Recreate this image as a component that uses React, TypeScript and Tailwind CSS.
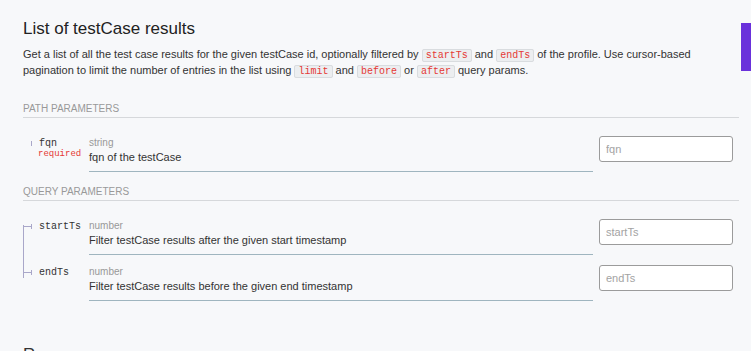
import React from "react";

type Param = {
  name: string;
  type: string;
  desc: string;
  required?: boolean;
};

const pathParams: Param[] = [
  { name: "fqn", type: "string", desc: "fqn of the testCase", required: true },
];

const queryParams: Param[] = [
  {
    name: "startTs",
    type: "number",
    desc: "Filter testCase results after the given start timestamp",
  },
  {
    name: "endTs",
    type: "number",
    desc: "Filter testCase results before the given end timestamp",
  },
];

const Code = ({ children }: { children: React.ReactNode }) => (
  <code className="font-[family-name:'Liberation_Mono',monospace] text-[10px] leading-[10px] text-[#e53935] bg-[#eceef0] border border-[#d9dcdf] px-[3px] rounded-[2px]">
    {children}
  </code>
);

const SectionHeader = ({ title, className }: { title: string; className: string }) => (
  <h5
    className={`${className} text-[10px] leading-[12px] uppercase text-[#999] pb-[2px] border-b border-[#d6d8db]`}
  >
    {title}
  </h5>
);

// tree line on the left of the name cell, like redoc's td background
const lineFor = (single: boolean, first: boolean, last: boolean) => {
  if (single) return "";
  if (first)
    return "bg-[linear-gradient(transparent_0,transparent_16px,#a9a7c9_16px,#a9a7c9_100%)] bg-[length:1px_100%] bg-no-repeat";
  if (last)
    return "bg-[linear-gradient(#a9a7c9_0,#a9a7c9_23px,transparent_23px,transparent_100%)] bg-[length:1px_100%] bg-no-repeat";
  return "bg-[linear-gradient(#a9a7c9,#a9a7c9)] bg-[length:1px_100%] bg-no-repeat";
};

const ParamRow = ({
  p,
  single,
  first,
  last,
}: {
  p: Param;
  single: boolean;
  first: boolean;
  last: boolean;
}) => (
  <div className="flex">
    <div className={`w-[66px] shrink-0 pt-[10px] ${lineFor(single, first, last)}`}>
      <div className="flex items-center h-[14px]">
        <span className={`w-[8px] h-px ${single ? "bg-transparent" : "bg-[#a9a7c9]"}`} />
        <span className="w-px h-[5px] bg-[#a9a7c9]" />
        <span className="ml-[7px] font-[family-name:'Liberation_Mono',monospace] text-[10px] text-[#333]">
          {p.name}
        </span>
      </div>
      {p.required && (
        <div className="ml-[15px] font-[family-name:'Liberation_Mono',monospace] text-[9px] leading-[8px] text-[#e53935]">
          required
        </div>
      )}
    </div>
    <div className="flex-1 pt-[10px] pb-[6px] border-b border-[#9fb5bf]">
      <div className="text-[10px] leading-[14px] text-[#999]">{p.type}</div>
      <div className="text-[11px] leading-[15px] text-[#333]">{p.desc}</div>
    </div>
    <div className="w-[146px] shrink-0 px-[6px] pt-[10px]">
      <input
        placeholder={p.name}
        className="w-[134px] h-[26px] bg-white border border-[#9b9b9b] rounded-[3px] px-[6px] text-[11px] text-[#333] placeholder:text-[#a3a3a3] outline-none"
      />
    </div>
  </div>
);

const ParamList = ({ params }: { params: Param[] }) => (
  <div className="mt-[8px]">
    {params.map((p, i) => (
      <ParamRow
        key={p.name}
        p={p}
        single={params.length === 1}
        first={i === 0}
        last={i === params.length - 1}
      />
    ))}
  </div>
);

const App = () => {
  return (
    <div className="h-[351px] overflow-hidden bg-[#f7f8fa] flex font-[family-name:'Liberation_Sans',Arial,sans-serif]">
      <main className="w-[741px] shrink-0 pl-[23px] pr-[2px] pt-[19px]">
        <h2 className="text-[17px] leading-[20px] text-[#222]">List of testCase results</h2>
        <p className="mt-[7px] text-[11px] leading-[16px] text-[#333]">
          Get a list of all the test case results for the given testCase id, optionally filtered by{" "}
          <Code>startTs</Code> and <Code>endTs</Code> of the profile. Use cursor-based pagination to
          limit the number of entries in the list using <Code>limit</Code> and <Code>before</Code> or{" "}
          <Code>after</Code> query params.
        </p>

        <SectionHeader title="Path Parameters" className="mt-[25px]" />
        <ParamList params={pathParams} />

        <SectionHeader title="Query Parameters" className="mt-[14px]" />
        <ParamList params={queryParams} />

        <h3 className="mt-[44px] text-[17px] leading-[20px] text-[#333]">Responses</h3>
      </main>
      {/* purple tab peeking in on the right */}
      <div className="w-[10px] h-[48px] mt-[23px] bg-[#6a31db]" />
    </div>
  );
};

export default App;
